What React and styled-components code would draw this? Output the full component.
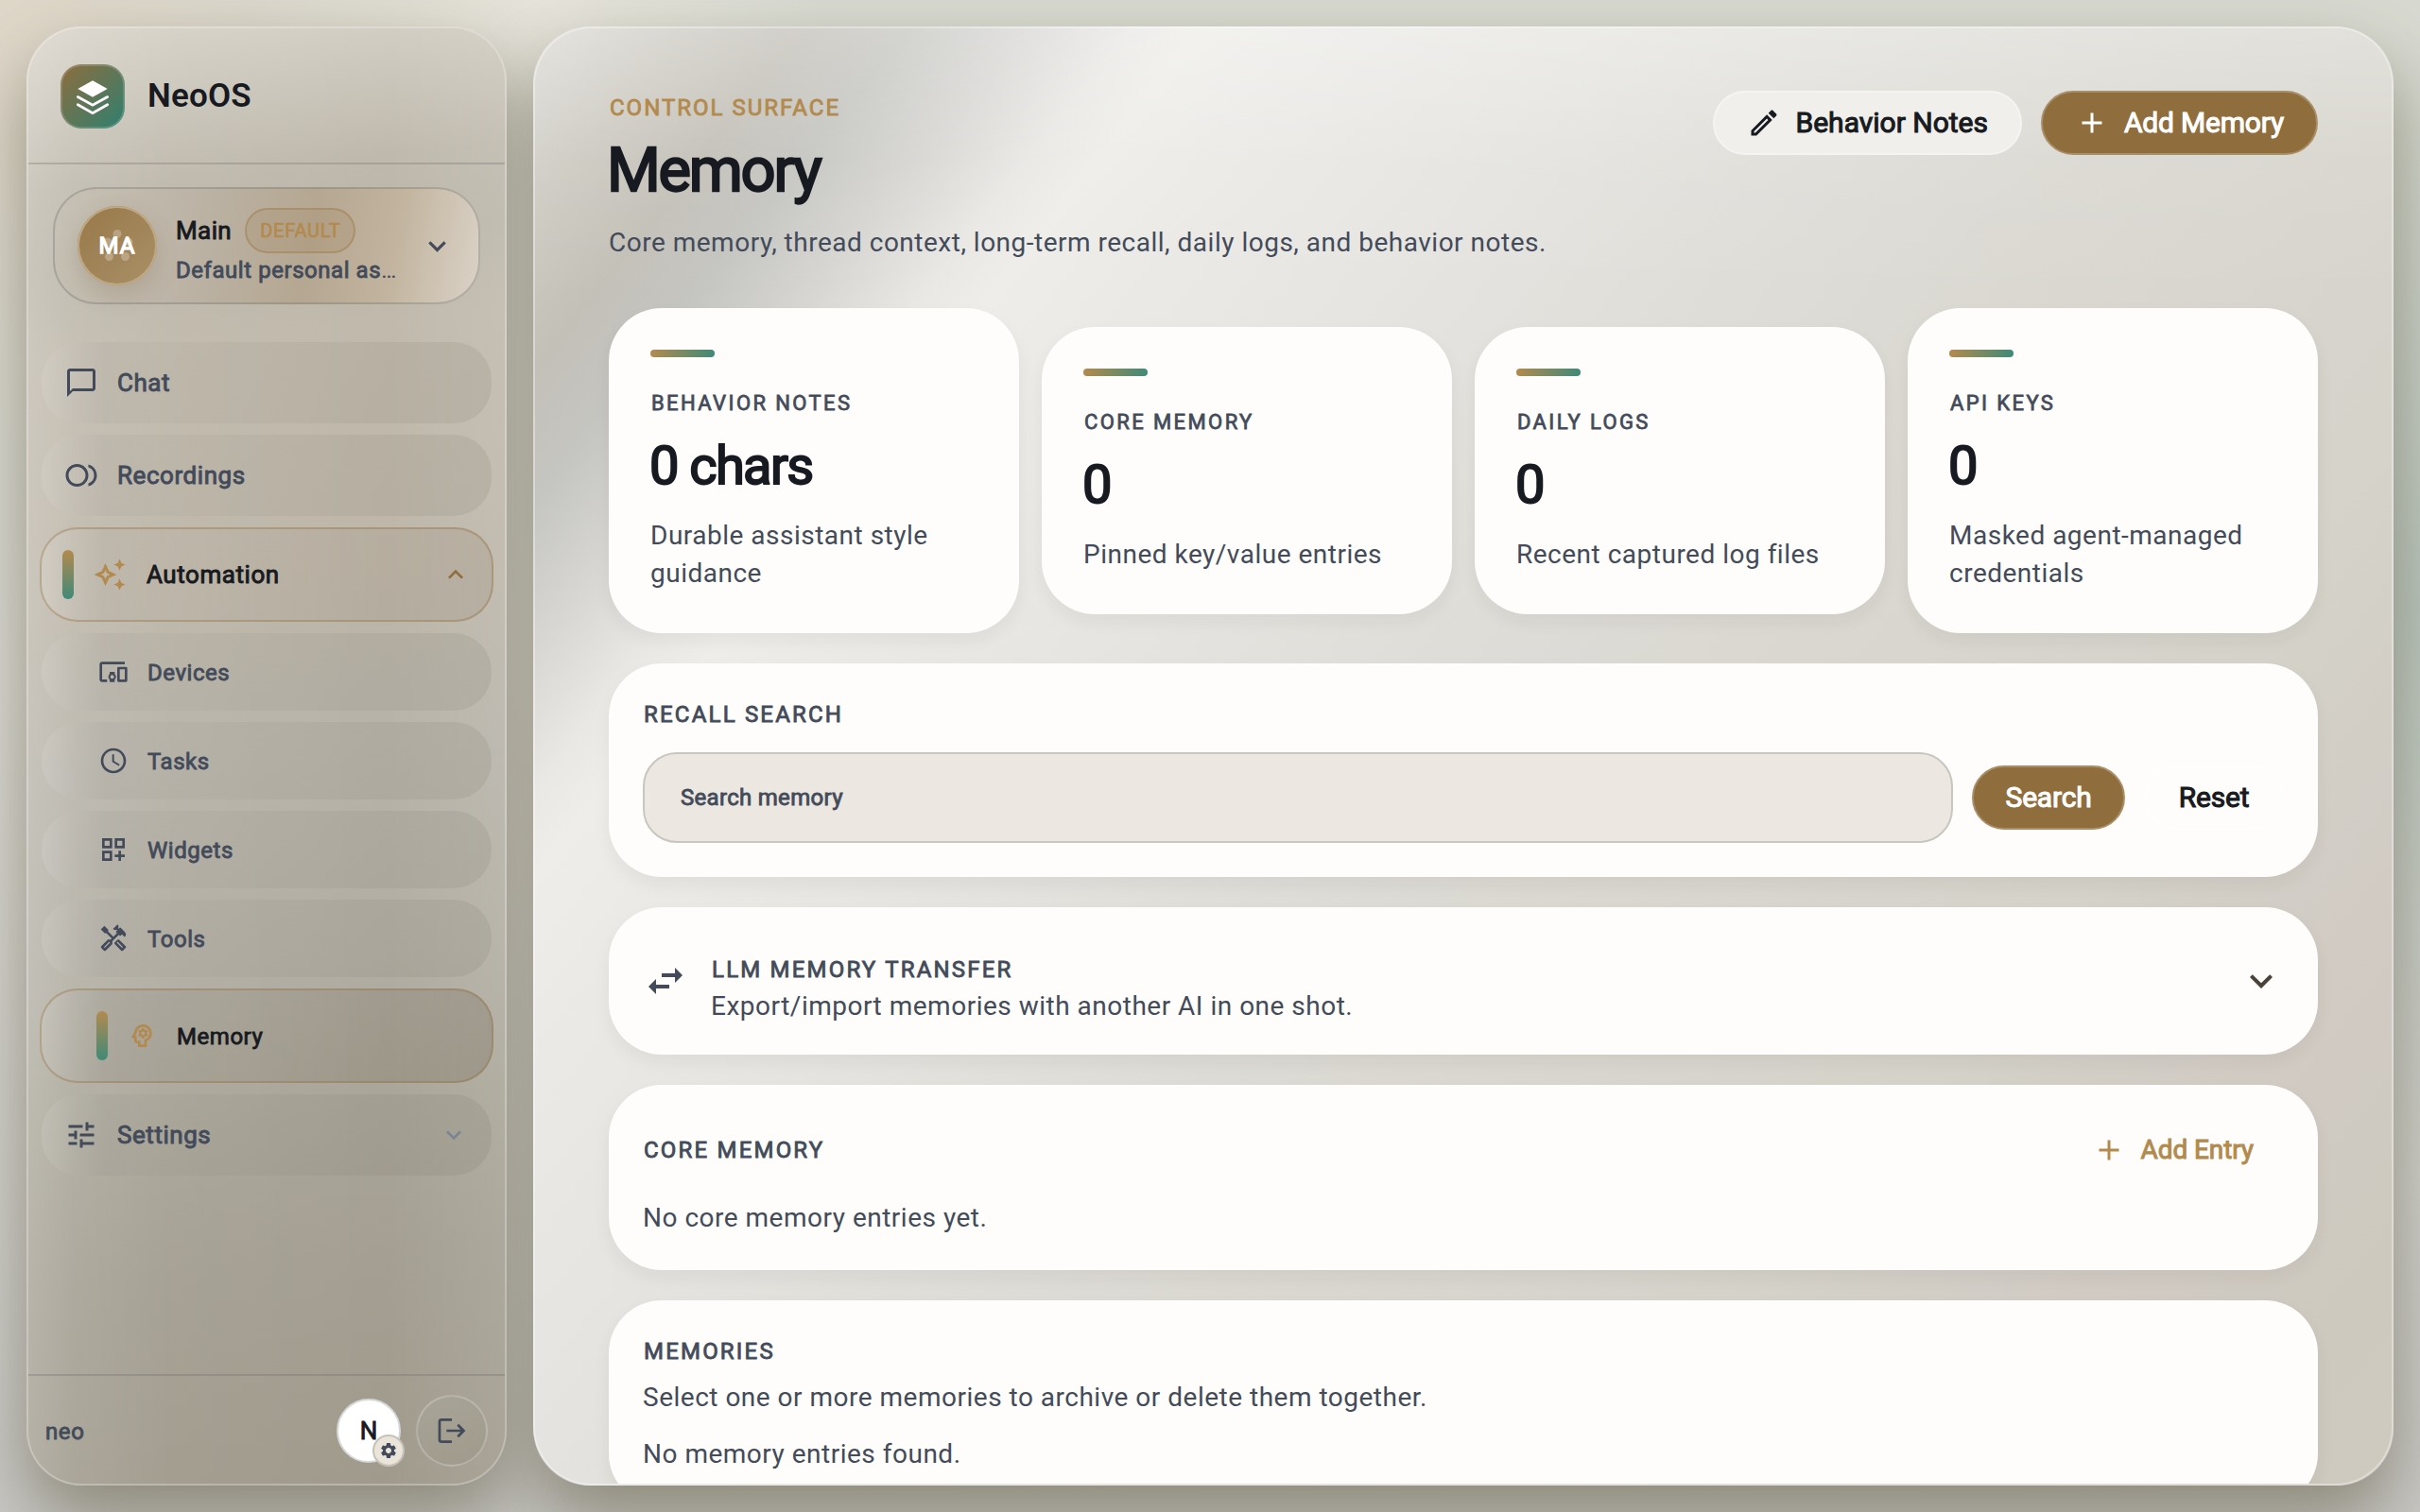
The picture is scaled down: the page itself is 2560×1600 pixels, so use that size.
import styled, { createGlobalStyle, css } from "styled-components";
import {
  MdAdd,
  MdChatBubbleOutline,
  MdDevicesOther,
  MdExpandLess,
  MdExpandMore,
  MdOutlineAutoAwesome,
  MdOutlineDashboardCustomize,
  MdOutlineEdit,
  MdOutlineFiberSmartRecord,
  MdOutlineHandyman,
  MdOutlinePsychology,
  MdOutlineSchedule,
  MdSettings,
  MdSwapHoriz,
  MdTune,
} from "react-icons/md";

const ink = "#171a20";
const muted = "#434b5a";
const gold = "#b38a4e";
const bronze = "#8f6d3d";

const navItems = [
  { label: "Chat", icon: MdChatBubbleOutline, height: 86 },
  { label: "Recordings", icon: MdOutlineFiberSmartRecord, height: 86 },
  { label: "Automation", icon: MdOutlineAutoAwesome, height: 100, active: true, arrow: "up" },
  { label: "Devices", icon: MdDevicesOther, height: 82, child: true },
  { label: "Tasks", icon: MdOutlineSchedule, height: 82, child: true },
  { label: "Widgets", icon: MdOutlineDashboardCustomize, height: 82, child: true },
  { label: "Tools", icon: MdOutlineHandyman, height: 82, child: true },
  { label: "Memory", icon: MdOutlinePsychology, height: 100, child: true, active: true, deep: true },
  { label: "Settings", icon: MdTune, height: 86, arrow: "down" },
];

const stats = [
  { label: "BEHAVIOR NOTES", value: "0 chars", desc: "Durable assistant style guidance" },
  { label: "CORE MEMORY", value: "0", desc: "Pinned key/value entries" },
  { label: "DAILY LOGS", value: "0", desc: "Recent captured log files" },
  { label: "API KEYS", value: "0", desc: "Masked agent-managed credentials" },
];

const NavItem = ({ item }) => {
  const Icon = item.icon;
  return (
    <NavRow $height={item.height} $active={item.active} $child={item.child} $deep={item.deep}>
      {item.active && <ActiveBar />}
      <Icon size={item.child ? 32 : 36} />
      <NavLabel $child={item.child} $active={item.active}>{item.label}</NavLabel>
      {item.arrow === "up" && <MdExpandLess size={32} color={bronze} />}
      {item.arrow === "down" && <MdExpandMore size={32} color="#7a8496" />}
    </NavRow>
  );
};

const StatCard = ({ stat }) => (
  <Stat>
    <StatBar />
    <StatLabel>{stat.label}</StatLabel>
    <StatValue>{stat.value}</StatValue>
    <StatDesc>{stat.desc}</StatDesc>
  </Stat>
);

const App = () => {
  return (
    <Page>
      <GlobalStyle />
      <SidebarWrap>
        <Sidebar>
          <Brand>
            <Logo>
              <svg width="68" height="68" viewBox="0 0 68 68">
                <path d="M34 17.3 49.7 26 34 34.7 18.3 26z" fill="#fff" />
                <path
                  d="M18.3 34.6 34 43.2 49.7 34.6M18.3 42.8 34 51.6 49.7 42.8"
                  fill="none"
                  stroke="#fff"
                  strokeWidth="2.8"
                  strokeLinecap="round"
                />
              </svg>
            </Logo>
            <BrandName>NeoOS</BrandName>
          </Brand>

          <AgentCard>
            <AgentAvatar>
              <AvatarDots width="84" height="84" viewBox="0 0 84 84">
                <g fill="#fff" fillOpacity="0.26">
                  <circle cx="42" cy="29.5" r="4.5" />
                  <circle cx="32" cy="38" r="4.5" />
                  <circle cx="54" cy="38" r="4.5" />
                  <circle cx="33.5" cy="53.5" r="4.5" />
                  <circle cx="50.5" cy="53.5" r="4.5" />
                </g>
              </AvatarDots>
              <AvatarText>MA</AvatarText>
            </AgentAvatar>
            <AgentInfo>
              <AgentTop>
                <AgentName>Main</AgentName>
                <Chip>DEFAULT</Chip>
              </AgentTop>
              <AgentDesc>
                Default personal as<Dots>…</Dots>
              </AgentDesc>
            </AgentInfo>
            <MdExpandMore size={37} color={muted} />
          </AgentCard>

          <Nav>
            {navItems.map((item) => (
              <NavItem key={item.label} item={item} />
            ))}
          </Nav>

          <Footer>
            <UserName>neo</UserName>
            <UserAvatar>
              N
              <Gear>
                <MdSettings size={20} />
              </Gear>
            </UserAvatar>
            <Logout>
              <svg width="36" height="36" viewBox="0 0 36 36" fill="none" stroke={muted} strokeWidth="2.7">
                <path d="M18 6.3H7a2 2 0 0 0-2 2v19.4a2 2 0 0 0 2 2h11" />
                <path d="M12.3 18H30.5M24.3 11.8l6.2 6.2-6.2 6.2" />
              </svg>
            </Logout>
          </Footer>
        </Sidebar>
      </SidebarWrap>

      <MainWrap>
        <Main>
          <Header>
            <div>
              <Eyebrow>CONTROL SURFACE</Eyebrow>
              <Title>Memory</Title>
              <Subtitle>Core memory, thread context, long-term recall, daily logs, and behavior notes.</Subtitle>
            </div>
            <Actions>
              <Button $variant="glass">
                <MdOutlineEdit size={36} />
                <ButtonText>Behavior Notes</ButtonText>
              </Button>
              <Button>
                <MdAdd size={36} />
                <ButtonText>Add Memory</ButtonText>
              </Button>
            </Actions>
          </Header>

          <StatGrid>
            {stats.map((stat) => (
              <StatCard key={stat.label} stat={stat} />
            ))}
          </StatGrid>

          <Section>
            <SectionTitle>RECALL SEARCH</SectionTitle>
            <SearchRow>
              <SearchInput>Search memory</SearchInput>
              <Button $width={162}>
                <ButtonText>Search</ButtonText>
              </Button>
              <Button $variant="plain" $width={148}>
                <ButtonText>Reset</ButtonText>
              </Button>
            </SearchRow>
          </Section>

          <Section>
            <TransferRow>
              <MdSwapHoriz size={48} color={muted} />
              <TransferText>
                <SectionTitle>LLM MEMORY TRANSFER</SectionTitle>
                <Body>Export/import memories with another AI in one shot.</Body>
              </TransferText>
              <MdExpandMore size={48} color="#4b4237" />
            </TransferRow>
          </Section>

          <Section>
            <CoreRow>
              <SectionTitle>CORE MEMORY</SectionTitle>
              <AddEntry>
                <MdAdd size={36} />
                <ButtonText>Add Entry</ButtonText>
              </AddEntry>
            </CoreRow>
            <Body>No core memory entries yet.</Body>
          </Section>

          <Section>
            <SectionTitle>MEMORIES</SectionTitle>
            <Body $top={10}>Select one or more memories to archive or delete them together.</Body>
            <Body $top={20}>No memory entries found.</Body>
          </Section>
        </Main>
      </MainWrap>
    </Page>
  );
};

export default App;

const GlobalStyle = createGlobalStyle`
  * {
    box-sizing: border-box;
  }
  body {
    margin: 0;
    overflow: hidden;
    font-family: Roboto, "Liberation Sans", sans-serif;
    color: ${muted};
  }
  svg {
    flex-shrink: 0;
  }
`;

/* regular cut thickened with an outline, width stays the same */
const bold = css`
  font-weight: 400;
  -webkit-text-stroke: 0.035em currentColor;
`;

/* optical alignment of text inside its line */
const nudge = css`
  padding-top: 1px;
  margin-bottom: -1px;
`;

/* shadow lives behind both panels, so neither one darkens the other */
const dropShadow = css`
  &::before {
    content: "";
    position: absolute;
    inset: 0;
    z-index: -1;
    border-radius: 60px;
    box-shadow: 0 36px 76px rgba(84, 76, 52, 0.52);
  }
`;

const Page = styled.div`
  isolation: isolate;
  width: 2560px;
  height: 1600px;
  padding: 28px;
  display: flex;
  gap: 28px;
  background:
    radial-gradient(560px 480px at 0 0, rgba(226, 214, 198, 0.75), transparent),
    radial-gradient(300px 200px at 570px 0, rgba(234, 231, 222, 0.8), transparent),
    radial-gradient(300px 620px at 2560px 640px, rgba(160, 184, 174, 0.55), transparent),
    linear-gradient(to bottom, #d8dad1 0%, #dbdad4 45%, #c9c9c6 100%);
`;

const SidebarWrap = styled.div`
  ${dropShadow}
  position: relative;
  width: 508px;
  flex-shrink: 0;
`;

const Sidebar = styled.div`
  height: 100%;
  display: flex;
  flex-direction: column;
  border: 2px solid rgba(255, 255, 255, 0.26);
  border-radius: 58px;
  background:
    linear-gradient(90deg, rgba(255, 255, 255, 0.22) 0%, rgba(255, 255, 255, 0.11) 10%, rgba(255, 255, 255, 0.03) 30%, rgba(255, 255, 255, 0) 75%, rgba(255, 255, 255, 0.1) 100%),
    linear-gradient(174deg, #d9d4ca 0%, #cdc8bd 5%, #bfb9ad 11%, #bbb6a9 16%, #c0b9ac 22%, #bdb6a9 38%, #b7b3a9 50%, #b1ada2 64%, #a9a598 74%, #a49f92 84%, #a09a8c 100%);
  background-origin: border-box;
`;

const Brand = styled.div`
  height: 144px;
  padding: 38px 34px 0;
  display: flex;
  gap: 24px;
  border-bottom: 2px solid rgba(120, 120, 118, 0.35);
`;

const Logo = styled.div`
  width: 68px;
  height: 68px;
  border-radius: 22px;
  background: linear-gradient(135deg, #8f6d3d 0%, #2f7f70 100%);
  box-shadow: inset 0 0 0 2px rgba(255, 255, 255, 0.16);
`;

const BrandName = styled.div`
  font-size: 35px;
  line-height: 68px;
  color: ${ink};
  font-weight: 600;
  letter-spacing: 0.2px;
`;

const AgentCard = styled.div`
  height: 124px;
  margin: 24px 26px 0;
  padding: 0 25px 0 24px;
  display: flex;
  align-items: center;
  border: 2px solid rgba(118, 120, 116, 0.38);
  border-radius: 46px;
  background: linear-gradient(100deg, #c7c2b6 0%, #bbb2a4 35%, #b5a791 60%, #c1b39d 78%, #d9d0c4 98%);
  background-origin: border-box;
`;

const AgentAvatar = styled.div`
  position: relative;
  width: 84px;
  height: 84px;
  flex-shrink: 0;
  display: flex;
  align-items: center;
  justify-content: center;
  border-radius: 50%;
  background: linear-gradient(135deg, #977848, #aa9068);
  box-shadow: inset 0 0 0 2px #c0a884, 0 10px 26px rgba(100, 80, 50, 0.2);
`;

const AvatarDots = styled.svg`
  position: absolute;
  inset: 0;
`;

const AvatarText = styled.span`
  position: relative;
  font-size: 24px;
  font-weight: 400;
  letter-spacing: 1px;
  color: #fff;
  -webkit-text-stroke: 1.3px #fff;
`;

const AgentInfo = styled.div`
  flex: 1;
  min-width: 0;
  margin: 4px 0 0 20px;
`;

const AgentTop = styled.div`
  display: flex;
  align-items: center;
  gap: 14px;
`;

const AgentName = styled.div`
  ${bold}
  font-size: 26px;
  letter-spacing: 0.4px;
  color: ${ink};
`;

const Chip = styled.div`
  ${bold}
  height: 48px;
  padding: 0 14px;
  line-height: 44px;
  border: 2px solid rgba(160, 125, 75, 0.5);
  border-radius: 24px;
  background: rgba(160, 130, 90, 0.2);
  font-size: 20px;
  letter-spacing: 0.8px;
  color: ${gold};
`;

const AgentDesc = styled.div`
  ${bold}
  font-size: 24px;
  line-height: 36px;
  letter-spacing: 0.55px;
  white-space: nowrap;
`;

const Dots = styled.span`
  -webkit-text-stroke-width: 0;
  letter-spacing: -1px;
`;

const Nav = styled.div`
  flex: 1;
  margin: 40px 14px 0;
  display: flex;
  flex-direction: column;
  gap: 12px;
`;

const NavRow = styled.div`
  height: ${(p) => p.$height}px;
  padding: 0 24px 0 ${(p) => (p.$child ? 60 : 24)}px;
  display: flex;
  align-items: center;
  gap: 20px;
  border-radius: 40px;
  background: linear-gradient(90deg, rgba(255, 255, 255, 0.1) 0%, rgba(100, 100, 106, 0.07) 14%, rgba(90, 86, 76, 0.04) 26%, rgba(84, 78, 62, 0.1) 100%);

  ${(p) =>
    p.$active &&
    css`
      margin: 0 -2px;
      padding: 0 22px;
      padding-left: ${p.$child ? 58 : 22}px;
      border: 2px solid rgba(150, 116, 68, 0.42);
      color: ${gold};
      background-image: ${p.$deep
        ? "linear-gradient(90deg, rgba(255, 255, 255, 0.12) 0%, rgba(110, 104, 100, 0.12) 14%, rgba(110, 96, 80, 0.12) 40%, rgba(92, 80, 60, 0.22) 100%)"
        : "linear-gradient(90deg, rgba(255, 255, 255, 0.16) 0%, rgba(140, 128, 118, 0.08) 14%, rgba(150, 125, 100, 0.04) 30%, rgba(120, 100, 76, 0.14) 100%)"};
      background-origin: border-box;
    `}
`;

const ActiveBar = styled.div`
  width: 12px;
  height: 52px;
  border-radius: 6px;
  background: linear-gradient(to bottom, #b38a4e, #3f8a78);
`;

const NavLabel = styled.div`
  ${bold}
  flex: 1;
  padding: ${(p) => (p.$child ? 1 : 0)}px 0 0 ${(p) => (p.$active ? 1 : 0)}px;
  font-size: ${(p) => (p.$child ? 24 : 26)}px;
  letter-spacing: 0.55px;
  color: ${(p) => (p.$active ? ink : muted)};
`;

const Footer = styled.div`
  height: 116px;
  padding: 2px 18px 0;
  display: flex;
  align-items: center;
  gap: 16px;
  border-top: 2px solid rgba(110, 110, 110, 0.32);
`;

const UserName = styled.div`
  ${bold}
  flex: 1;
  padding-top: 2px;
  font-size: 24px;
  letter-spacing: 0.6px;
`;

const UserAvatar = styled.div`
  ${bold}
  position: relative;
  width: 68px;
  height: 68px;
  line-height: 64px;
  text-align: center;
  border: 2px solid #d5d7d9;
  border-radius: 50%;
  background: #fff;
  font-size: 26px;
  color: ${ink};
`;

const Gear = styled.div`
  position: absolute;
  right: -6px;
  bottom: -6px;
  width: 34px;
  height: 34px;
  display: flex;
  align-items: center;
  justify-content: center;
  border: 2px solid #c6c2b8;
  border-radius: 50%;
  background: #ebe4da;
  color: ${muted};
`;

const Logout = styled.div`
  width: 76px;
  height: 76px;
  display: flex;
  align-items: center;
  justify-content: center;
  border: 2px solid rgba(255, 255, 255, 0.22);
  border-radius: 50%;
  background: linear-gradient(135deg, rgba(176, 176, 164, 0.35), rgba(140, 134, 116, 0.3));
`;

const MainWrap = styled.div`
  ${dropShadow}
  position: relative;
  flex: 1;
  min-width: 0;
`;

const Main = styled.div`
  height: 100%;
  padding: 66px 78px 0;
  overflow: hidden;
  display: flex;
  flex-direction: column;
  gap: 32px;
  border: 2px solid rgba(255, 255, 255, 0.34);
  border-radius: 62px;
  background:
    linear-gradient(to bottom, rgba(255, 255, 255, 0.26) 0, rgba(255, 255, 255, 0.06) 140px, rgba(255, 255, 255, 0) 300px),
    linear-gradient(
      128.1deg,
      #dbdad4 0%,
      #cdcac2 5%,
      #c3c0b8 9%,
      #c5c5c1 12.5%,
      #d8d7d4 16.5%,
      #e9e8e5 20%,
      #eeede9 22.2%,
      #ebeae7 26%,
      #e5e4e0 36%,
      #dfded9 45%,
      #dad8d1 56%,
      #d4d2c9 74%,
      #d1cbc4 84%,
      #cec9bf 94%,
      #cfcabe 100%
    );
  background-origin: border-box;

  > * {
    flex-shrink: 0;
  }
`;

const Header = styled.div`
  display: flex;
  justify-content: space-between;
  align-items: flex-start;
  margin-bottom: 18px;
`;

const Eyebrow = styled.div`
  ${bold}
  padding-left: 1px;
  font-size: 24px;
  line-height: 36px;
  letter-spacing: 2px;
  color: ${gold};
`;

const Title = styled.div`
  ${bold}
  margin: 12px 0 20px -2px;
  font-size: 65px;
  line-height: 72px;
  letter-spacing: -2.2px;
  color: ${ink};
`;

const Subtitle = styled.div`
  ${nudge}
  font-size: 28px;
  line-height: 40px;
  letter-spacing: 0.5px;
`;

const Actions = styled.div`
  display: flex;
  gap: 20px;
`;

const Button = styled.div`
  ${bold}
  height: 68px;
  width: ${(p) => (p.$width ? p.$width + "px" : "auto")};
  padding: 0 ${(p) => (p.$width ? 0 : 34)}px;
  display: flex;
  align-items: center;
  justify-content: center;
  gap: 16px;
  border: 2px solid #a98f69;
  border-radius: 34px;
  background: ${bronze};
  color: #fff;
  font-size: 30px;
  letter-spacing: -0.2px;
  white-space: nowrap;

  ${(p) =>
    p.$variant === "glass" &&
    css`
      border-color: #f5f4f2;
      background: #f0efeb;
      color: ${ink};
      letter-spacing: 0;
    `}
  ${(p) =>
    p.$variant === "plain" &&
    css`
      border-color: #fefefd;
      background: transparent;
      color: ${ink};
    `}
`;

const ButtonText = styled.span`
  padding-bottom: 2px;
`;

const StatGrid = styled.div`
  display: grid;
  grid-template-columns: repeat(4, 1fr);
  align-items: center;
  gap: 24px;
`;

const panel = css`
  border-radius: 56px;
  background: #fefdfb;
  box-shadow: 0 8px 18px rgba(50, 45, 30, 0.055);
`;

const Stat = styled.div`
  ${panel}
  padding: 44px;
`;

const StatBar = styled.div`
  width: 68px;
  height: 8px;
  border-radius: 4px;
  background: linear-gradient(90deg, #b38a4e, #3f8a78);
`;

const StatLabel = styled.div`
  ${bold}
  ${nudge}
  margin-top: 32px;
  padding-left: 1px;
  font-size: 22px;
  line-height: 32px;
  letter-spacing: 2.4px;
`;

const StatValue = styled.div`
  ${bold}
  margin: 19px 0 21px -1px;
  font-size: 56px;
  line-height: 64px;
  letter-spacing: -1.6px;
  color: ${ink};
`;

const StatDesc = styled.div`
  ${nudge}
  font-size: 28px;
  line-height: 40px;
  letter-spacing: 0.5px;
`;

const Section = styled.div`
  ${panel}
  padding: 36px;
`;

const SectionTitle = styled.div`
  ${bold}
  padding-left: 1px;
  font-size: 24px;
  line-height: 36px;
  letter-spacing: 2.2px;
`;

const SearchRow = styled.div`
  margin-top: 22px;
  display: flex;
  align-items: center;
  gap: 20px;
`;

const SearchInput = styled.div`
  ${bold}
  flex: 1;
  height: 96px;
  padding: 0 38px;
  line-height: 92px;
  border: 2px solid #c7c6bf;
  border-radius: 36px;
  background: #ece7e0;
  font-size: 24px;
  letter-spacing: 0.3px;
`;

const TransferRow = styled.div`
  height: 84px;
  display: flex;
  align-items: center;
  gap: 24px;
`;

const TransferText = styled.div`
  flex: 1;
  padding-top: 16px;
`;

const CoreRow = styled.div`
  height: 66px;
  margin-bottom: 18px;
  padding-right: 32px;
  display: flex;
  align-items: center;
  justify-content: space-between;
`;

const AddEntry = styled.div`
  ${bold}
  display: flex;
  align-items: center;
  gap: 16px;
  font-size: 28px;
  letter-spacing: -0.1px;
  color: ${gold};
`;

const Body = styled.div`
  ${nudge}
  margin-top: ${(p) => p.$top || 0}px;
  font-size: 28px;
  line-height: 40px;
  letter-spacing: 0.5px;
`;
